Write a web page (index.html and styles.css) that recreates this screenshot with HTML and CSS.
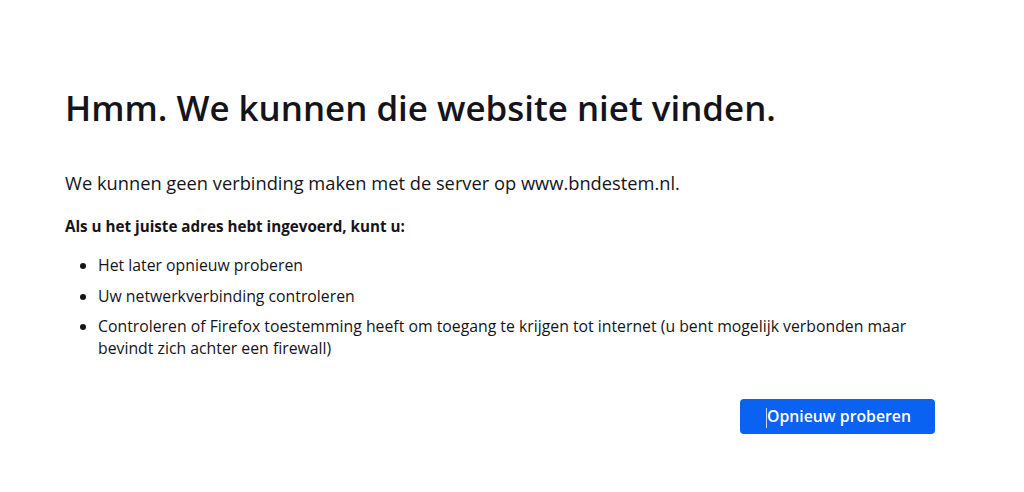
FILE: index.html
```html
<!DOCTYPE html>
<html lang="nl">
<head>
<meta charset="utf-8">
<title>Server niet gevonden</title>
<link rel="stylesheet" href="styles.css">
</head>
<body>
<main class="container">
  <h1 class="title">Hmm. We kunnen die website niet vinden.</h1>
  <p class="intro">We kunnen geen verbinding maken met de server op www.bndestem.nl.</p>
  <p class="lead">Als u het juiste adres hebt ingevoerd, kunt u:</p>
  <ul class="tips">
    <li>Het later opnieuw proberen</li>
    <li>Uw netwerkverbinding controleren</li>
    <li>Controleren of Firefox toestemming heeft om toegang te krijgen tot internet (u bent mogelijk verbonden maar bevindt zich achter een firewall)</li>
  </ul>
  <div class="actions">
    <button class="retry"><span class="caret"></span>Opnieuw proberen</button>
  </div>
</main>
</body>
</html>
```

FILE: styles.css
```css
html, body {
  margin: 0;
  padding: 0;
  background: #ffffff;
}
body {
  font-family: "Open Sans", "Noto Sans", sans-serif;
  color: #15141a;
  font-size: 15px;
}
.container {
  width: 870px;
  padding: 82px 0 0 65px;
}
.title {
  margin: 0;
  font-size: 34.9px;
  font-weight: 600;
  line-height: 52px;
}
.intro {
  margin: 37px 0 0;
  font-size: 18.3px;
  line-height: 24px;
}
.lead {
  margin: 21px 0 0;
  font-weight: 700;
  font-size: 15.2px;
  line-height: 20px;
}
.tips {
  margin: 18px 0 0;
  padding-left: 33px;
  font-size: 15.8px;
}
.tips li {
  line-height: 22px;
  margin-bottom: 8.5px;
}
.actions {
  display: flex;
  justify-content: flex-end;
  margin-top: 40px;
}
.retry {
  font-family: inherit;
  font-size: 15.8px;
  font-weight: 600;
  color: #ffffff;
  background: #0a62f2;
  border: none;
  border-radius: 4px;
  width: 195px;
  height: 35px;
  padding: 0 0 0 2px;
}
.caret {
  display: inline-block;
  width: 1px;
  height: 20px;
  background: #c8d6ff;
  vertical-align: middle;
}
```
